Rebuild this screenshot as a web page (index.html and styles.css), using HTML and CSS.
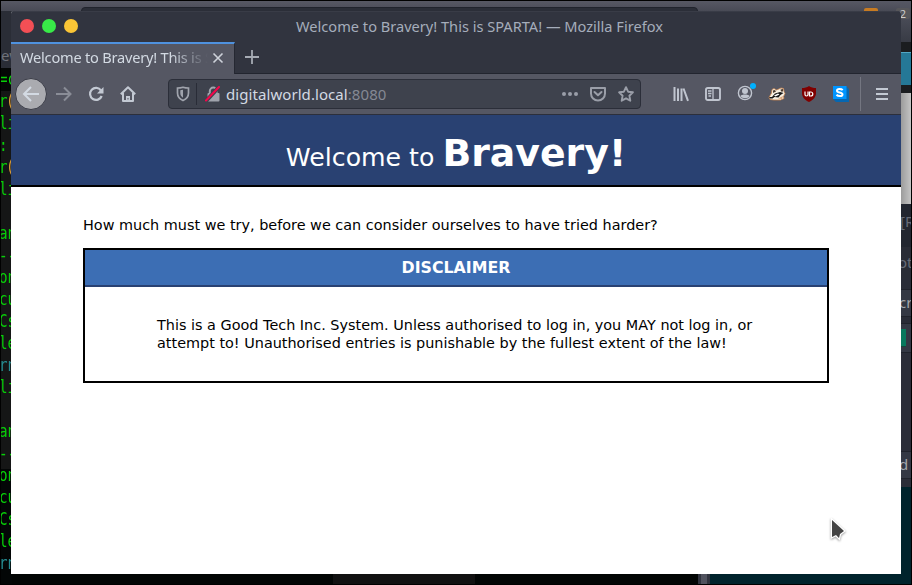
FILE: index.html
```
<!DOCTYPE html>
<html lang="en">
<head>
<meta charset="utf-8">
<title>Welcome to Bravery! This is SPARTA!</title>
<link rel="stylesheet" href="styles.css">
</head>
<body>
<div class="desktop">
  <div class="back-top"><div class="back-title"></div></div>
  <div class="terminal">
    <div class="term-tab">ew</div>
    <pre><span>=c</span>
<span>r<b>(</b></span>
<span>li</span>
<span>:</span>
<span>r<b>(</b></span>
<span>li</span>

<span>an</span>
<span>--</span>
<span>on</span>
<span>cu</span>
<span>Cs</span>
<span>le</span>
<i>rn</i>
<span>li</span>

<span>an</span>
<span>--</span>
<span>on</span>
<span>cu</span>
<span>Cs</span>
<span>le</span>
<i>rn</i></pre>
  </div>
  <div class="back-bottom"><div class="patch"></div><div class="edge"></div></div>
  <div class="back-right">
    <div class="r-panel"></div><div class="r-dark"></div><div class="r-blue"></div><div class="r-black"></div>
    <div class="r-gray"></div><div class="r-label">[R</div><div class="r-row">ot</div><div class="r-gap"></div>
    <div class="r-input">cr</div><div class="r-button"><div></div></div><div class="r-list"></div>
    <div class="r-input r-last">d</div><div class="r-foot"></div>
  </div>
  <div class="badge orange"></div><div class="badge gray">2</div>

  <div class="window">
    <div class="titlebar">
      <div class="lights"><span class="red"></span><span class="green"></span><span class="yellow"></span></div>
      <div class="title">Welcome to Bravery! This is SPARTA! — Mozilla Firefox</div>
    </div>
    <div class="tabs">
      <div class="tab"><span class="tab-label">Welcome to Bravery! This is SPARTA!</span>
        <svg width="12" height="12" viewBox="0 0 12 12"><path d="M1.500 1.500l9 9M10.500 1.500l-9 9" fill="none" stroke="#ced2da" stroke-width="1.600"/></svg>
      </div>
      <svg class="plus" width="14" height="14" viewBox="0 0 14 14"><path d="M7 0v14M0 7h14" fill="none" stroke="#a6abb4" stroke-width="1.800"/></svg>
    </div>
    <div class="toolbar">
      <div class="back"><svg width="18" height="16" viewBox="0 0 18 16"><path d="M17 8H2M9 1L2 8l7 7" fill="none" stroke="#d3dae3" stroke-width="2"/></svg></div>
      <svg class="forward" width="18" height="16" viewBox="0 0 18 16"><path d="M1 8h14M9 1.500L15.500 8 9 14.500" fill="none" stroke="#8a8d97" stroke-width="2"/></svg>
      <svg class="reload" width="16" height="16" viewBox="0 0 16 16"><path d="M13 4.500A6 6 0 1 0 13.700 10" fill="none" stroke="#c3c9d3" stroke-width="2.200"/><path d="M15.500 1v6.500H9z" fill="#c3c9d3"/></svg>
      <svg class="home" width="16" height="16" viewBox="0 0 16 16"><path d="M.8 8.300L8 1.300l7.200 7M3 7v8h10V7" fill="none" stroke="#c3c9d3" stroke-width="2" stroke-linejoin="round"/><path d="M6 15v-5h4v5z" fill="#c3c9d3"/><path d="M7.500 12h1v1.500h-1z" fill="#555763"/></svg>
      <div class="urlbar">
        <svg class="shield" width="14" height="16" viewBox="0 0 14 16"><path d="M7 1.200C5.300 1.700 3.200 2 1.500 2v5c0 3.500 2 6 5.500 7.500 3.500-1.500 5.500-4 5.500-7.500V2C10.800 2 8.700 1.700 7 1.200z" fill="none" stroke="#a0a4ad" stroke-width="1.700"/><path d="M7 3.800v8C5.200 10.700 4.300 9 4.300 7V4.300z" fill="#a0a4ad"/></svg>
        <span class="sep"></span>
        <svg class="lock" width="16" height="16" viewBox="0 0 16 16"><path d="M4.800 8V5a3.400 3.400 0 0 1 6.800 0v3" fill="none" stroke="#a0a4ad" stroke-width="2"/><rect x="2.500" y="7" width="12" height="8.500" rx="1" fill="#a0a4ad"/><path d="M1 15L14 1" stroke="#3e424d" stroke-width="4"/><path d="M1 14.500L14 1" stroke="#f3064b" stroke-width="2" stroke-linecap="round"/></svg>
        <span class="url">digitalworld.local<em>:8080</em></span>
        <svg class="dots" width="16" height="16" viewBox="0 0 16 16" fill="#9a9ea8"><circle cx="2" cy="8" r="2"/><circle cx="8" cy="8" r="2"/><circle cx="14" cy="8" r="2"/></svg>
        <svg class="pocket" width="16" height="16" viewBox="0 0 16 16"><path d="M1 2h14v5.500a7 7 0 0 1-14 0z" fill="none" stroke="#9a9ea8" stroke-width="2" stroke-linejoin="round"/><path d="M4.500 6L8 9.300 11.500 6" fill="none" stroke="#9a9ea8" stroke-width="2" stroke-linecap="round" stroke-linejoin="round"/></svg>
        <svg class="star" width="16" height="16" viewBox="0 0 16 16"><path d="M8 1.200l2.100 4.500 4.800.6-3.500 3.400.9 5L8 12.300l-4.300 2.400.9-5L1.100 6.300l4.800-.6z" fill="none" stroke="#9a9ea8" stroke-width="1.900" stroke-linejoin="round"/></svg>
      </div>
      <div class="actions">
        <svg width="16" height="16" viewBox="0 0 16 16"><path d="M1.500 1v14M5 2.500V15M8.500 2.500V15M10.500 2.500L15 14.800" fill="none" stroke="#c0c5cf" stroke-width="2"/></svg>
        <svg width="16" height="16" viewBox="0 0 16 16"><rect x="1" y="2" width="14" height="12" rx="1.800" fill="none" stroke="#c0c5cf" stroke-width="1.900"/><path d="M8 2v12M3 5h3.500M3 7.500h3.500M3.500 10H6" stroke="#c0c5cf" stroke-width="1.300"/></svg>
        <svg class="account" width="20" height="18" viewBox="0 0 20 18"><circle cx="8" cy="10" r="6.600" fill="none" stroke="#c0c5cf" stroke-width="1.400"/><circle cx="8" cy="8" r="3" fill="#c0c5cf"/><path d="M3.500 13c1-2 8-2 9 0-1.500 3-7.500 3-9 0z" fill="#c0c5cf"/><circle cx="16" cy="3" r="3" fill="#00b1ff"/></svg>
        <svg width="18" height="16" viewBox="0 0 18 16"><path d="M1 11.500L3.500 7 4 3.500 6 2.500l2.500 1.500L13 2l2.500.5.5 3 1 2-1.500 3 .5 2-3.500 1.500H6L2 13.500z" fill="#f7efe2" stroke="#c4814d" stroke-width=".8"/><path d="M1 11h3l3-3.500 5-1.500 3.500 1-3 2-2 2.500-4-.5-2 1.500H2z" fill="#171717"/><path d="M5 4.500l2-.5 1 1.500-3 1.500zM12.500 3.500L15 3v2.500h-2z" fill="#4a3b30"/><path d="M6 9.500l4-2 1.500 1-4 2z" fill="#fff"/><path d="M10 12.500l5-2.500-1 3z" fill="#d8a277"/></svg>
        <svg width="16" height="16" viewBox="0 0 16 16"><path d="M8 0c2 1.500 4.500 2 7 2v5c0 4-2.500 7-7 9-4.500-2-7-5-7-9V2c2.500 0 5-.5 7-2z" fill="#800000"/><path d="M4 5.500v3q0 1.500 1.500 1.500T7 8.500v-3M8.500 6v4h1.300a2 2 0 0 0 0-4z" fill="none" stroke="#fff" stroke-width="1.200"/></svg>
        <svg width="16" height="16" viewBox="0 0 16 16"><path d="M0 13h13V0l3 3v13H3z" fill="#0667b1"/><path d="M0 0h13.500v13H0z" fill="#0095ff"/><path d="M9.700 4.200C8.500 2.800 4 2.500 4 4.700c0 2.300 5.500 1.300 5.500 3.700 0 2.200-4.500 2-6 .4" fill="none" stroke="#fff" stroke-width="2"/></svg>
      </div>
      <span class="divider"></span>
      <svg class="menu" width="12" height="12" viewBox="0 0 12 12"><path d="M0 1h12M0 6h12M0 11h12" stroke="#c3c9d3" stroke-width="2"/></svg>
    </div>
    <main class="page">
      <header>Welcome to <strong>Bravery!</strong></header>
      <section>
        <p class="lead">How much must we try, before we can consider ourselves to have tried harder?</p>
        <div class="box">
          <h2>DISCLAIMER</h2>
          <p>This is a Good Tech Inc. System. Unless authorised to log in, you MAY not log in, or<br>attempt to! Unauthorised entries is punishable by the fullest extent of the law!</p>
        </div>
      </section>
    </main>
  </div>
  <svg class="cursor" width="20" height="26" viewBox="0 0 20 26"><path d="M4 2v17l4-2 3 3 1-4 4-3z" fill="#444" stroke="#fff" stroke-width="2.500" paint-order="stroke"/></svg>
</div>
</body>
</html>
```
FILE: styles.css
```
* { box-sizing: border-box; }
body { margin: 0; background: #000; }
.desktop { position: relative; width: 912px; height: 585px; overflow: hidden; background: #000; font-family: "Noto Sans", sans-serif; }
.back-top { position: absolute; left: 1px; top: 1px; width: 910px; height: 12px; background: linear-gradient(#575864, #464853); padding: 6px 0 0 80px; }
.back-title { width: 617px; height: 6px; background: #2b2e38; border: 1px solid #20232c; border-radius: 4px 4px 0 0; }

.terminal { position: absolute; left: 1px; top: 11px; width: 11px; height: 573px; overflow: hidden; background: linear-gradient(#050706 0 80px, #151616 80px 458px, #030606 458px); }
.term-tab { height: 57px; padding-top: 33px; background: #2a2d36; color: #6f727a; font-size: 15px; line-height: 22px; }
.terminal pre { margin: 0 0 0 -2px; width: 24px; font: 17px/22px "DejaVu Sans Mono", monospace; transform: scaleX(.84); transform-origin: 0 0; color: #08cf08; }
.terminal b { color: #d79a38; font-weight: normal; margin-left: -2px; }
.terminal i { color: #258c91; font-style: normal; }

.back-bottom { position: absolute; left: 12px; top: 573px; width: 899px; height: 11px; display: flex; background: linear-gradient(90deg, #020504 686px, #00232c 686px); }
.patch { margin-left: 321px; width: 142px; background: #111; }
.edge { margin-left: 223px; width: 12px; background: #50525e; border: solid #30333e; border-width: 0 3px; }

.back-right { position: absolute; left: 900px; top: 1px; width: 11px; height: 583px; overflow: hidden; display: flex; flex-direction: column; background: #00232c; color: #a3a5a9; font-size: 15px; line-height: 24px; }
.r-panel { height: 41px; background: linear-gradient(#555763, #383b45); }
.r-dark { height: 10px; background: #1b1d20; }
.r-blue { height: 33px; background: #257897; border-top: 1px solid #52a7c5; }
.r-black { height: 8px; background: #1b1d20; }
.r-gray { height: 111px; background: linear-gradient(90deg, #989898, #c4c4c4); }
.r-label { height: 43px; padding-top: 5px; background: #222630; color: #666b76; }
.r-row { height: 31px; padding-top: 3px; background: #292c36; color: #686d79; text-indent: -2px; }
.r-gap { height: 11px; background: #292c37; }
.r-input { height: 28px; background: #343844; border: solid #20232c; border-width: 1px 0; text-indent: -1px; }
.r-button { margin-top: 6px; height: 30px; padding-top: 5px; background: #343844; border: solid #20232c; border-width: 1px 0; box-shadow: 0 -6px #292c37; }
.r-button div { width: 6px; height: 18px; background: #08785d; border-bottom: 1px solid #17453a; }
.r-list { height: 98px; background: #2b2d38; }
.r-foot { height: 8px; background: #2b2d38; }
.badge { position: absolute; top: 8px; height: 11px; width: 14px; border-radius: 2px; font-size: 11px; line-height: 12px; text-align: center; }
.orange { left: 864px; background: #c77b22; }
.gray { left: 896px; background: #57575b; color: #ccc; }

.window { position: absolute; left: 11px; top: 11px; width: 890px; height: 563px; display: flex; flex-direction: column; background: #fff; border-radius: 3px 3px 0 0; overflow: hidden; }
.titlebar { height: 31px; flex: none; display: grid; grid-template-columns: 105px 1fr; align-items: center; background: #31343f; border-top: 1px solid #393c47; color: #a5adbb; font-size: 14.600px; }
.lights { display: flex; gap: 8px; padding-left: 9px; margin-top: -2px; }
.lights span { width: 14px; height: 14px; border-radius: 50%; }
.red { background: #f34f55; } .green { background: #38ea48; } .yellow { background: #fac536; }
.title { padding-right: 58px; margin-top: -2px; text-align: center; white-space: nowrap; }
.tabs { height: 32px; flex: none; display: flex; background: linear-gradient(#31343f 31px, #22252f 31px); }
.tab { width: 224px; display: flex; align-items: center; padding: 0 0 2px 9px; background: #555763; border-top: 2px solid #4f92df; border-right: 1px solid #252832; color: #d3dae3; }
.tab-label { width: 188px; margin-right: 4px; margin-top: -3px; overflow: hidden; white-space: nowrap; font-size: 14.600px; letter-spacing: -.22px; line-height: 24px; -webkit-mask-image: linear-gradient(90deg, #000 150px, transparent 188px); mask-image: linear-gradient(90deg, #000 150px, transparent 188px); }
.plus { margin: 8px 0 0 10px; }
.toolbar { height: 41px; flex: none; display: flex; align-items: center; background: #555763; border-bottom: 1px solid #2c2f3b; padding-left: 4px; }
.back { width: 32px; height: 32px; border-radius: 50%; display: grid; place-items: center; background: #aaabb0; border: 1px solid #3b3d48; }
.forward { margin-left: 8px; } .reload { margin-left: 15px; } .home { margin-left: 16px; }
.urlbar { width: 473px; height: 30px; margin-left: 32px; display: flex; align-items: center; background: #3e424d; border: 1px solid #2b2e39; border-radius: 4px; }
.shield { margin-left: 7px; }
.sep { width: 1px; height: 22px; margin: 0 8px 0 6px; background: #292c37; }
.url { flex: 1; margin-left: 5px; color: #d3dae3; font-size: 15px; letter-spacing: .07px; line-height: 24px; }
.url em { color: #858994; font-style: normal; }
.pocket { margin: 0 12px; }
.star { margin-right: 6px; }
.actions { display: flex; align-items: center; gap: 16px; margin-left: 32px; }
.account { margin-top: -4px; margin-right: -4px; }
.actions svg:nth-child(4) { margin: 0 -1px; }
.divider { width: 1px; height: 34px; margin-left: 11px; background: #747681; }
.menu { margin-left: 15px; }

.page { flex: 1; color: #000; font-family: "DejaVu Sans", sans-serif; }
.page header { height: 72px; padding-top: 5px; background: #294172; border-bottom: 2px solid #000; color: #fff; text-align: center; font-size: 25.200px; line-height: 76px; white-space: nowrap; }
.page header strong { font-size: 37.800px; line-height: 1; }
.page section { padding: 29px 72px 0; font-size: 14.420px; line-height: 18px; }
.page p { margin: 0; white-space: nowrap; }
.box { height: 135px; margin-top: 14px; border: 2px solid #000; }
.box h2 { height: 37px; margin: 0; background: #3c6eb4; border-bottom: 2px solid #294172; color: #fff; text-align: center; font-size: 15.800px; line-height: 35px; }
.box p { padding: 29px 72px; }
.cursor { position: absolute; left: 828px; top: 518px; filter: drop-shadow(0 1px 1px #0006); }
```
